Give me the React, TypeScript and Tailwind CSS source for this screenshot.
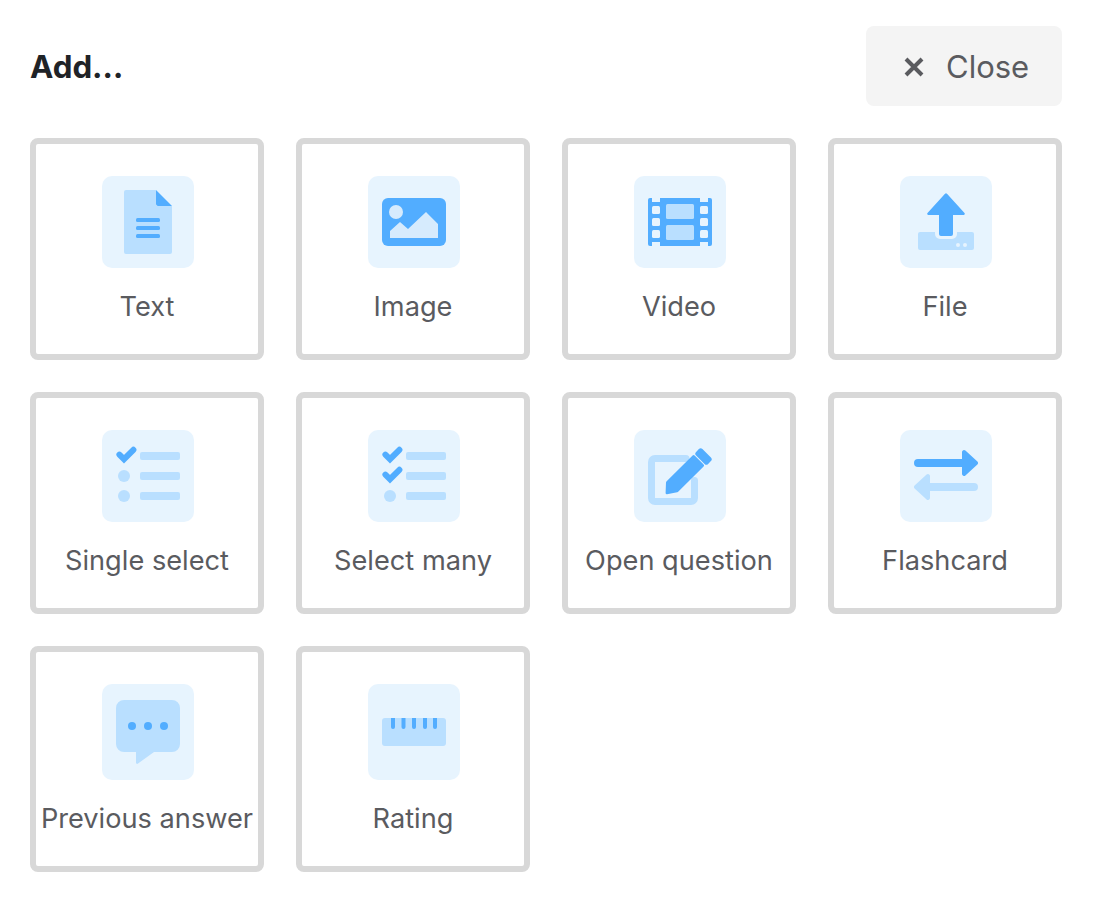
const D = "#52adff";
const L = "#b9dfff";
const T = "#e7f4fe";

function Check({ y }: { y: number }) {
  return <path d={`M3.4 ${y + 7.6}L8 ${y + 12.2}L17.4 ${y + 2.8}`} fill="none" stroke={D} strokeWidth="6" strokeLinecap="round" strokeLinejoin="miter" />;
}

function ListLines() {
  return (
    <>
      <rect x="24" y="8" width="40" height="8" rx="2" fill={L} />
      <rect x="24" y="28" width="40" height="8" rx="2" fill={L} />
      <rect x="24" y="48" width="40" height="8" rx="2" fill={L} />
    </>
  );
}

const icons: Record<string, React.ReactNode> = {
  text: (
    <>
      <path d="M10 0H40V16H56V62a2 2 0 0 1-2 2H10a2 2 0 0 1-2-2V2a2 2 0 0 1 2-2Z" fill={L} />
      <path d="M40 0L56 16H42a2 2 0 0 1-2-2Z" fill={D} />
      <rect x="20" y="28" width="24" height="4" rx="1.5" fill={D} />
      <rect x="20" y="36" width="24" height="4" rx="1.5" fill={D} />
      <rect x="20" y="44" width="24" height="4" rx="1.5" fill={D} />
    </>
  ),
  image: (
    <>
      <rect x="0" y="8" width="64" height="48" rx="6" fill={D} />
      <circle cx="14" cy="22" r="7" fill="#d6ebfd" />
      <path d="M8 41L18 32L26 39L44 22L56 34V48H8Z" fill="#d6ebfd" />
    </>
  ),
  video: (
    <>
      <rect x="0" y="8" width="64" height="48" rx="2" fill={D} />
      <rect x="4" y="8" width="8" height="4" fill={T} />
      <rect x="52" y="8" width="8" height="4" fill={T} />
      <rect x="4" y="52" width="8" height="4" fill={T} />
      <rect x="52" y="52" width="8" height="4" fill={T} />
      {[16, 28, 40].map((y) => (
        <g key={y}>
          <rect x="4" y={y} width="8" height="8" rx="1.5" fill={T} />
          <rect x="52" y={y} width="8" height="8" rx="1.5" fill={T} />
        </g>
      ))}
      <rect x="18" y="14" width="28" height="15" rx="1.5" fill={L} />
      <rect x="18" y="35" width="28" height="15" rx="1.5" fill={L} />
    </>
  ),
  file: (
    <>
      <path d="M6 42H21V44a5 5 0 0 0 5 5H38a5 5 0 0 0 5-5V42H58a2 2 0 0 1 2 2V58a2 2 0 0 1-2 2H6a2 2 0 0 1-2-2V44a2 2 0 0 1 2-2Z" fill={L} />
      <circle cx="44" cy="55" r="2" fill={T} />
      <circle cx="51" cy="55" r="2" fill={T} />
      <path d="M31 3.8a1.4 1.4 0 0 1 2 0L50.5 23a1.2 1.2 0 0 1-.9 2H39V44a2 2 0 0 1-2 2H27a2 2 0 0 1-2-2V25H14.4a1.2 1.2 0 0 1-.9-2Z" fill={D} />
    </>
  ),
  single: (
    <>
      <Check y={3} />
      <circle cx="8" cy="32" r="6" fill={L} />
      <circle cx="8" cy="52" r="6" fill={L} />
      <ListLines />
    </>
  ),
  many: (
    <>
      <Check y={3} />
      <Check y={23} />
      <circle cx="8" cy="52" r="6" fill={L} />
      <ListLines />
    </>
  ),
  open: (
    <>
      <path d="M38 14.5H7a3.5 3.5 0 0 0-3.5 3.5V54a3.5 3.5 0 0 0 3.5 3.5H43a3.5 3.5 0 0 0 3.5-3.5V36.5" fill="none" stroke={L} strokeWidth="7" strokeLinecap="round" />
      <path d="M18.4 37.6L44.6 11.6a1.4 1.4 0 0 1 2 0L55.6 20.6a1.4 1.4 0 0 1 0 2L30.4 47.6a2 2 0 0 1-1.2.6L19 50.2a1.4 1.4 0 0 1-1.4-1.5L18 38.4Z" fill={D} />
      <rect x="47" y="8" width="17" height="9" rx="2.5" transform="rotate(45 55.5 12.5)" fill={D} />
    </>
  ),
  flash: (
    <>
      <path d="M4 15H48V8a2 2 0 0 1 3.4-1.4L63.4 17.6a2 2 0 0 1 0 2.8L51.4 31.4A2 2 0 0 1 48 30V23H4a4 4 0 0 1 0-8Z" fill={D} />
      <path d="M60 39H16V32a2 2 0 0 0-3.4-1.4L.6 41.6a2 2 0 0 0 0 2.8L12.6 55.4A2 2 0 0 0 16 54V47H60a4 4 0 0 0 0-8Z" fill={L} />
    </>
  ),
  prev: (
    <>
      <path d="M8 0H56a8 8 0 0 1 8 8V44a8 8 0 0 1-8 8H38L22 63.6a1.2 1.2 0 0 1-2-1V52H8a8 8 0 0 1-8-8V8a8 8 0 0 1 8-8Z" fill={L} />
      <circle cx="16" cy="26" r="4" fill={D} />
      <circle cx="32" cy="26" r="4" fill={D} />
      <circle cx="48" cy="26" r="4" fill={D} />
    </>
  ),
  rating: (
    <>
      <rect x="0" y="18" width="64" height="28" rx="3" fill={L} />
      {[9, 19.5, 30, 41, 51].map((x) => (
        <path key={x} d={`M${x} 18h4v9a2 2 0 0 1-4 0Z`} fill={D} />
      ))}
    </>
  ),
};

const items = [
  ["Text", "text"],
  ["Image", "image"],
  ["Video", "video"],
  ["File", "file"],
  ["Single select", "single"],
  ["Select many", "many"],
  ["Open question", "open"],
  ["Flashcard", "flash"],
  ["Previous answer", "prev"],
  ["Rating", "rating"],
];

export default function App() {
  return (
    <div className="min-h-[914px] bg-white pt-[26px] pl-[30px] pr-[40px] font-['Inter','Liberation_Sans',sans-serif]">
      <div className="flex h-20 items-center justify-between">
        <h1 className="pt-[3px] text-[31.3px] font-bold leading-none text-[#1f2327]">Add…</h1>
        <button className="flex h-20 w-[196px] items-center gap-[22px] rounded-lg bg-[#f4f4f4] pl-[37px] text-[31px] leading-none text-[#5a5b5f]">
          <svg width="22" height="22" viewBox="0 0 22 22" fill="none" stroke="#5a5b5f" strokeWidth="4" className="mt-px">
            <path d="M3 3L19 19M19 3L3 19" />
          </svg>
          <span className="-ml-px pt-px">Close</span>
        </button>
      </div>
      <div className="mt-8 grid grid-cols-[repeat(4,234px)] gap-8">
        {items.map(([label, key], i) => (
          <button key={key} className="flex flex-col items-center rounded-lg border-[6px] border-[#d8d8d8] bg-white pt-8 pb-[27px]">
            <div className={`ml-[2px] flex w-[92px] items-center justify-center rounded-[10px] bg-[#e7f4fe] ${i >= 8 ? "h-24" : "h-[92px]"}`}>
              <svg width="64" height="64" viewBox="0 0 64 64">
                {icons[key]}
              </svg>
            </div>
            <span className="mt-[19px] mb-px text-[27.2px] leading-[39px] whitespace-nowrap text-[#5a5b5f]">{label}</span>
          </button>
        ))}
      </div>
    </div>
  );
}
